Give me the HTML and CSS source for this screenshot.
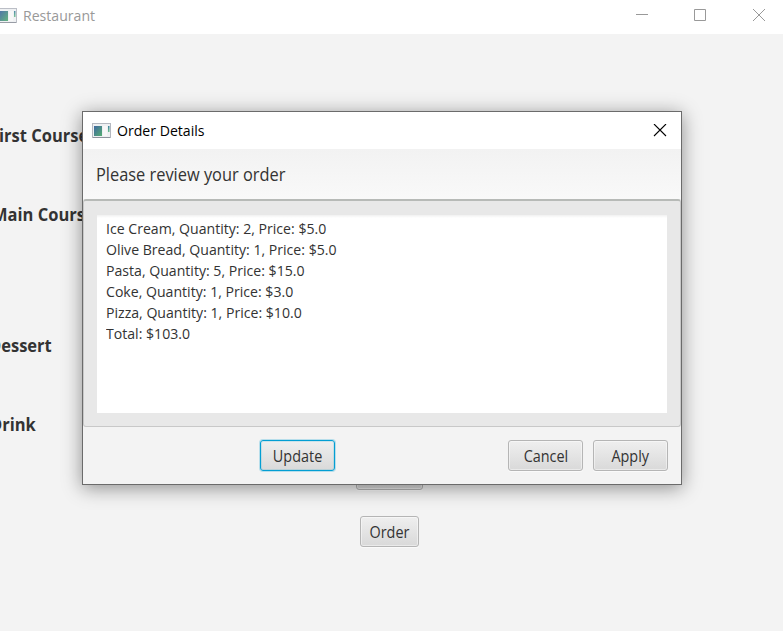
FILE: index.html
```html
<!DOCTYPE html>
<html lang="en">
<head>
<meta charset="utf-8">
<title>Restaurant</title>
<link rel="stylesheet" href="styles.css">
</head>
<body>
<svg width="0" height="0" class="defs" aria-hidden="true">
  <defs>
    <linearGradient id="pane" x1="0" y1="0" x2="1" y2="1"><stop offset="0" stop-color="#3f68a0"/><stop offset="1" stop-color="#55ad72"/></linearGradient>
    <linearGradient id="bar" x1="0" y1="0" x2="0" y2="1"><stop offset="0" stop-color="#3f7fa0"/><stop offset="1" stop-color="#6cc08a"/></linearGradient>
    <symbol id="app-icon" viewBox="0 0 19 15">
      <rect x=".5" y=".5" width="18" height="14" fill="#eef0f2" stroke="#b4b8c0"/>
      <path d="M1 14.500h17" stroke="#8d929c"/>
      <rect x="2" y="3" width="8" height="10" fill="url(#pane)"/>
      <rect x="11" y="3" width="4" height="10" fill="#f7f7f7"/>
      <rect x="16" y="3" width="1.500" height="6" fill="url(#bar)"/>
    </symbol>
  </defs>
</svg>
<div class="window">
  <header class="titlebar">
    <svg class="icon" width="19" height="15"><use href="#app-icon"/></svg>
    <span class="title"><span class="fit">Restaurant</span></span>
    <svg class="controls" width="130" height="14" fill="none" stroke="#999"><path d="M0 6.500h12M58.500 1.500h11v11h-11zM117 1l12 12M129 1l-12 12"/></svg>
  </header>
  <main class="menu">
    <h2 class="course first"><span class="fit">First Course</span></h2>
    <h2 class="course main"><span class="fit">Main Course</span></h2>
    <h2 class="course dessert"><span class="fit">Dessert</span></h2>
    <h2 class="course drink"><span class="fit">Drink</span></h2>
    <div class="actions">
      <button class="btn hidden-action" aria-label="Add"></button>
      <button class="btn order"><span>Order</span></button>
    </div>
  </main>
</div>
<section class="dialog">
  <header class="dialog-title">
    <svg class="icon" width="19" height="15"><use href="#app-icon"/></svg>
    <span class="title"><span class="fit">Order Details</span></span>
    <svg class="close" width="14" height="14" stroke="#000" stroke-width="1.100"><path d="M1 0l12 12M13 0L1 12"/></svg>
  </header>
  <div class="dialog-header"><span class="fit">Please review your order</span></div>
  <div class="dialog-content">
    <div class="summary">
      <div><span class="fit">Ice Cream, Quantity: 2, Price: $5.0</span></div>
      <div><span class="fit">Olive Bread, Quantity: 1, Price: $5.0</span></div>
      <div><span class="fit">Pasta, Quantity: 5, Price: $15.0</span></div>
      <div><span class="fit">Coke, Quantity: 1, Price: $3.0</span></div>
      <div><span class="fit">Pizza, Quantity: 1, Price: $10.0</span></div>
      <div><span class="fit">Total: $103.0</span></div>
    </div>
  </div>
  <footer class="dialog-buttons">
    <button class="btn focused"><span>Update</span></button>
    <button class="btn cancel"><span>Cancel</span></button>
    <button class="btn"><span>Apply</span></button>
  </footer>
</section>
</body>
</html>
```
FILE: styles.css
```css
* { box-sizing: border-box; }
body {
  margin: 0;
  width: 783px;
  height: 631px;
  overflow: hidden;
  position: relative;
  background: #f3f3f3;
  color: #333;
  font: 15px/21px "Open Sans", "Noto Sans", sans-serif;
}
svg { display: block; flex: none; }
.defs { position: absolute; }
.fit, .btn span { display: inline-block; white-space: nowrap; transform: scaleX(.91); transform-origin: left; }
.btn span { transform: scaleX(.93); transform-origin: center; }

.window { height: 631px; overflow: hidden; }
.titlebar { height: 34px; background: #fff; display: flex; align-items: center; padding: 0 17px 4px 0; color: #999; }
.titlebar .icon { margin-left: -2px; opacity: .9; }
.title { font-size: 15px; margin-left: 6px; }
.title .fit { transform: scaleX(.94); }
.controls { margin-left: auto; }

.menu { display: flex; flex-direction: column; }
.course { margin: 0 0 0 -10px; font-size: 17px; line-height: 24px; font-weight: 700; }
.course .fit { transform: scaleX(.97); }
.first { margin-top: 90px; }
.main { margin-top: 55px; margin-left: -8px; }
.dessert { margin-top: 107px; margin-left: -11px; }
.drink { margin-top: 55px; }
.actions { display: flex; flex-direction: column; align-items: center; width: 779px; margin-top: 22px; }

.btn {
  width: 75px;
  height: 31px;
  padding: 0;
  border: 1px solid #b5b5b5;
  border-radius: 3px;
  background: linear-gradient(#efefef, #d9d9d9);
  box-shadow: inset 0 0 0 1px rgba(255, 255, 255, .45), 0 1px 0 #fafafa;
  color: #333;
  font: inherit;
  font-size: 15.5px;
  line-height: 28px;
  white-space: nowrap;
}
.hidden-action { width: 67px; }
.order { width: 59px; margin-top: 26px; }
.focused { border-color: #039ed3; box-shadow: 0 0 0 1px rgba(3, 158, 211, .25), inset 0 0 0 1px rgba(3, 158, 211, .15); }

.dialog {
  position: absolute;
  left: 82px;
  top: 111px;
  width: 600px;
  height: 374px;
  border: 1px solid #6b6b6b;
  background: #f3f3f3;
  box-shadow: 0 3px 18px rgba(0, 0, 0, .42);
  display: flex;
  flex-direction: column;
}
.dialog-title { height: 37px; background: #fff; color: #000; display: flex; align-items: center; padding: 0 14px 0 9px; }
.close { margin-left: auto; }
.dialog-header { height: 50px; padding: 0 13px; font-size: 18px; line-height: 51px; background: linear-gradient(#f2f2f2, #f9f9f9); }
.dialog-content { height: 228px; padding: 15px 13px 13px; border: 1px solid #c8c8c8; border-top: 2px solid #b7bab7; border-radius: 3px; background: #e8e8e8; }
.summary { height: 198px; margin-top: -1px; padding: 3px 9px; background: linear-gradient(#f1f1f1, #fff 3px); }
.summary .fit { transform: scaleX(.94); }
.dialog-buttons { display: flex; padding: 13px 13px 0 177px; }
.cancel { margin: 0 10px 0 auto; }
```
